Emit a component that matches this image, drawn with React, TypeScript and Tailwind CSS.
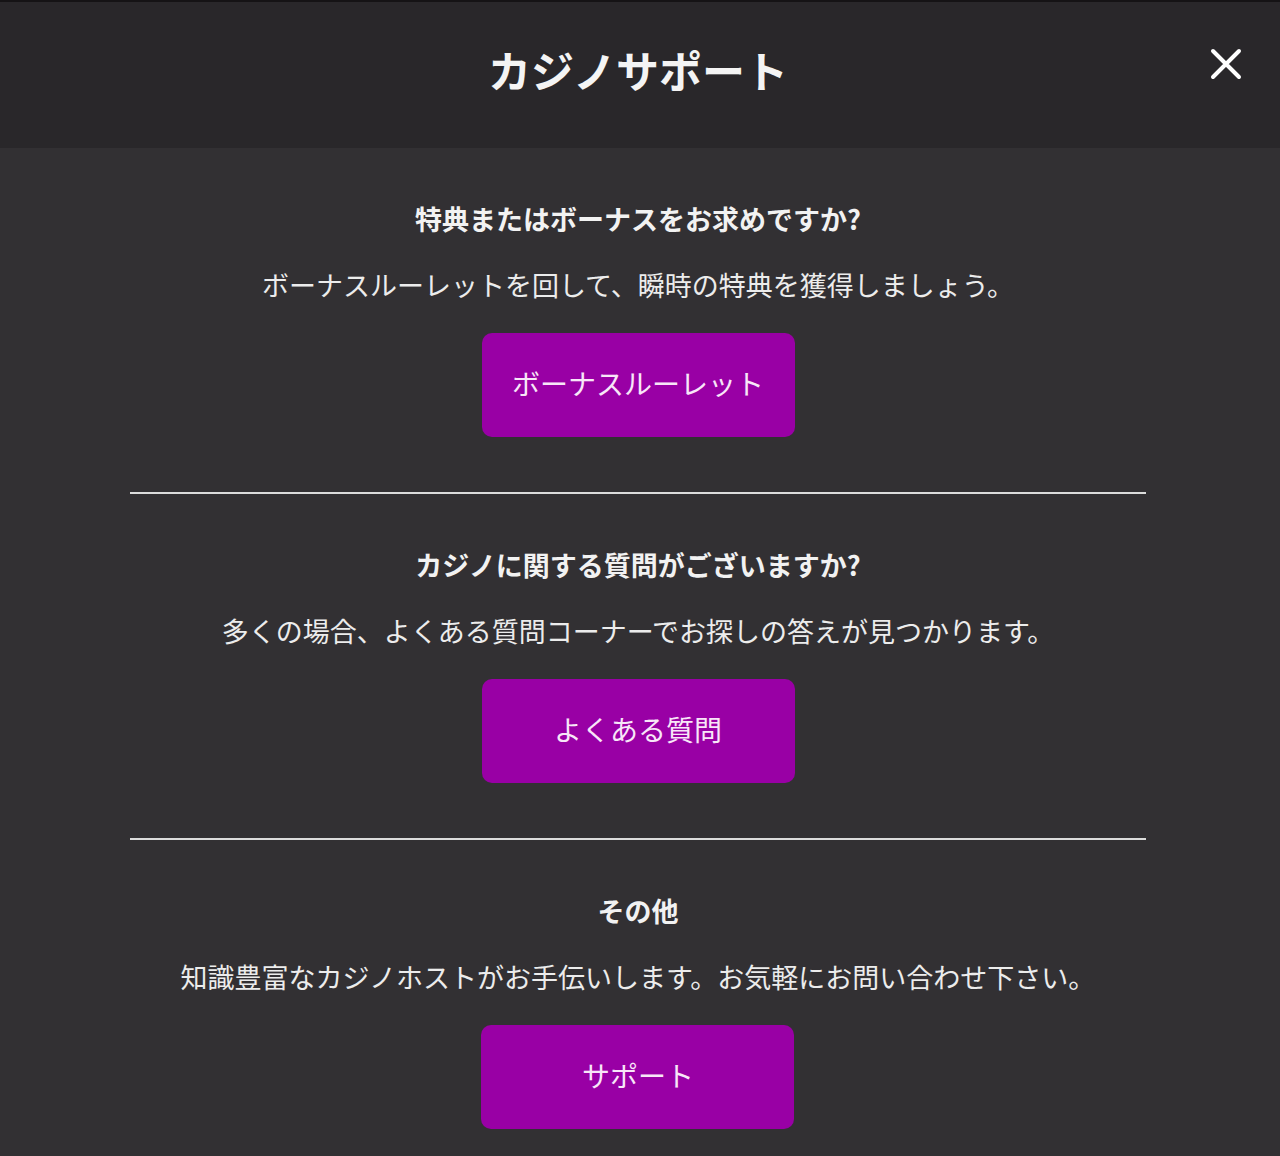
import React from "react";

const sections = [
  {
    title: "特典またはボーナスをお求めですか?",
    text: "ボーナスルーレットを回して、瞬時の特典を獲得しましょう。",
    button: "ボーナスルーレット",
  },
  {
    title: "カジノに関する質問がございますか?",
    text: "多くの場合、よくある質問コーナーでお探しの答えが見つかります。",
    button: "よくある質問",
  },
  {
    title: "その他",
    text: "知識豊富なカジノホストがお手伝いします。お気軽にお問い合わせ下さい。",
    button: "サポート",
  },
];

export default function App() {
  return (
    <div
      className="w-[1280px] h-[1156px] bg-[#323033] text-white overflow-hidden"
      style={{ fontFamily: '"Noto Sans CJK JP", "Noto Sans", sans-serif' }}
    >
      <header className="relative h-[148px] bg-[#29272a] border-t-2 border-[#151315] flex items-center pr-[4px] justify-center">
        <h1 className="text-[43px] font-bold leading-none text-[#f4f4f4] -mt-[12px]">カジノサポート</h1>
        <button aria-label="閉じる" className="absolute right-[36px] top-[44px] w-[36px] h-[36px] flex items-center justify-center">
          <svg width="32" height="32" viewBox="0 0 32 32" fill="none">
            <path d="M3 3 L29 29 M29 3 L3 29" stroke="#ffffff" strokeWidth="4" strokeLinecap="round" />
          </svg>
        </button>
      </header>

      <main className="w-[1276px] flex flex-col items-center pt-[55px]">
        {sections.map((s, i) => (
          <React.Fragment key={s.title}>
            {i > 0 && <div className="w-[1016px] h-[2px] bg-[#dcdcdc] mt-[55px] mb-[55px]" />}
            <section className="flex flex-col items-center">
              <h2 className="text-[27px] leading-[32px] font-bold text-[#f2f2f2]">{s.title}</h2>
              <p className="mt-[34px] text-[27px] leading-[32px] text-[#ececec]">{s.text}</p>
              <button className="mt-[32px] w-[313px] h-[104px] pb-[5px] rounded-[10px] bg-[#9900a5] text-[28px] text-[#f8e6f8] flex items-center justify-center">
                {s.button}
              </button>
            </section>
          </React.Fragment>
        ))}
      </main>
    </div>
  );
}
